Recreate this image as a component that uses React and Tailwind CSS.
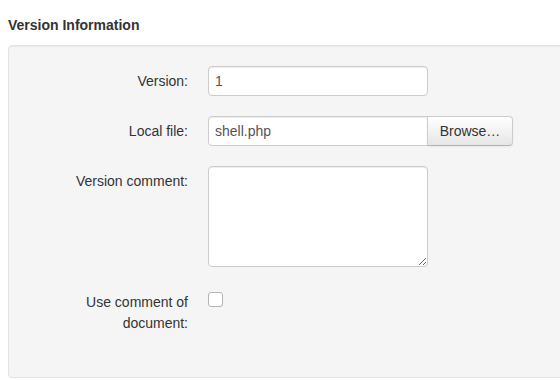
import React from 'react';

const font = { fontFamily: '"Liberation Sans", Arial, sans-serif' };

function Row({ label, children, className = '' }) {
  return (
    <div className={`flex items-start ${className}`}>
      <label className="w-[179px] shrink-0 pt-[5px] pr-0 text-right text-[14px] leading-[21px] text-[#333]">
        {label}
      </label>
      <div className="ml-5 flex items-start">{children}</div>
    </div>
  );
}

export default function App() {
  return (
    <div className="w-[560px] h-[380px] overflow-hidden bg-white" style={font}>
      <h3 className="pl-2 pt-[16px] text-[14px] leading-[18px] font-bold text-[#333]">
        Version Information
      </h3>
      <div className="ml-2 mt-[11px] w-[600px] h-[333px] rounded-[4px] border border-[#e3e3e3] bg-[#f5f5f5] pt-[20px] shadow-[inset_0_1px_1px_rgba(0,0,0,0.05)]">
        <Row label="Version:">
          <input
            readOnly
            defaultValue="1"
            className="h-[30px] w-[220px] rounded-[4px] border border-[#ccc] bg-white px-[6px] text-[14px] text-[#555] outline-none shadow-[inset_0_1px_1px_rgba(0,0,0,0.075)]"
            style={font}
          />
        </Row>
        <Row label="Local file:" className="mt-5">
          <input
            readOnly
            defaultValue="shell.php"
            className="h-[30px] w-[220px] rounded-l-[4px] border border-[#ccc] bg-white px-[6px] text-[14px] text-[#555] outline-none shadow-[inset_0_1px_1px_rgba(0,0,0,0.075)]"
            style={font}
          />
          <button
            className="-ml-px h-[30px] w-[86px] rounded-r-[4px] border border-[#ccc] border-b-[#b3b3b3] bg-gradient-to-b from-white to-[#e6e6e6] text-[14px] text-[#333] shadow-[inset_0_1px_0_rgba(255,255,255,0.2),0_1px_2px_rgba(0,0,0,0.05)]"
            style={font}
          >
            Browse…
          </button>
        </Row>
        <Row label="Version comment:" className="mt-5">
          <textarea
            readOnly
            className="block h-[101px] w-[220px] rounded-[4px] border border-[#ccc] bg-white px-[6px] py-1 text-[14px] text-[#555] outline-none shadow-[inset_0_1px_1px_rgba(0,0,0,0.075)]"
            style={font}
          />
        </Row>
        <Row label={<>Use comment of<br />document:</>} className="mt-5">
          <span className="mt-[5px] block h-[15px] w-[15px] rounded-[3px] border border-[#b5b5b5] bg-white" />
        </Row>
      </div>
    </div>
  );
}
